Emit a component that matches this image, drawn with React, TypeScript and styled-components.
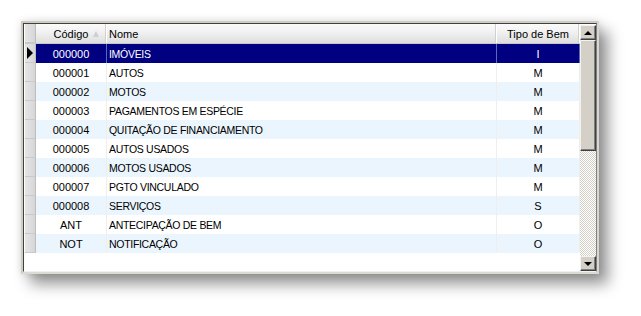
import styled, { createGlobalStyle } from 'styled-components';

const GlobalStyle = createGlobalStyle`
  html, body {
    margin: 0;
    padding: 0;
    background: #ffffff;
  }
  body {
    font-family: "Liberation Sans", Arial, sans-serif;
    font-size: 11px;
    color: #000;
  }
`;

const Page = styled.div`
  width: 641px;
  height: 316px;
  padding: 21px 0 0 21px;
  box-sizing: border-box;
`;

const Frame = styled.div`
  width: 578px;
  height: 253px;
  box-sizing: border-box;
  border: 2px solid #cfccc4;
  border-right-color: #d8d6d0;
  border-bottom-color: #dcdad4;
  background: #fff;
  box-shadow: 9px 10px 14px rgba(0, 0, 0, 0.42), 0 0 8px rgba(0, 0, 0, 0.12);
  display: flex;
`;

const Inner = styled.div`
  flex: 1;
  display: flex;
  border-top: 1px solid #404040;
  border-left: 1px solid #404040;
  border-right: 1px solid #808080;
  border-bottom: 1px solid #f0f0f0;
  padding: 0 0 0 1px;
`;

const Grid = styled.div`
  flex: 1;
  display: flex;
  flex-direction: column;
`;

const cols = '11px 71px 1fr 83px';

const HeaderRow = styled.div`
  display: grid;
  grid-template-columns: ${cols};
  height: 19px;
  background: linear-gradient(#fbfbfb, #f2f2f2 40%, #dedede);
  border-bottom: 1px solid #c8c8c8;
`;

const HeaderCell = styled.div<{ $align?: string }>`
  display: flex;
  align-items: center;
  justify-content: ${({ $align }) => $align || 'center'};
  padding-left: ${({ $align }) => ($align === 'flex-start' ? '2px' : '0')};
  border-right: 1px solid #ffffff;
  box-shadow: inset -1px 0 0 #d0d0d0;
  position: relative;
  color: #000;
`;

const SortMark = styled.span`
  position: absolute;
  right: 7px;
  top: 7px;
  width: 0;
  height: 0;
  border-left: 3px solid transparent;
  border-right: 3px solid transparent;
  border-bottom: 6px solid #cfcfcf;
`;

const Row = styled.div<{ $alt?: boolean; $selected?: boolean }>`
  display: grid;
  grid-template-columns: ${cols};
  height: 19px;
  background: ${({ $selected, $alt }) => ($selected ? '#000080' : $alt ? '#ebf5fe' : '#ffffff')};
  color: ${({ $selected }) => ($selected ? '#ffffff' : '#000000')};
`;

const Indicator = styled.div`
  background: linear-gradient(90deg, #e6e6e6, #d6d6d6);
  border-right: 1px solid #bdbdbd;
  border-bottom: 1px solid #c9c9c9;
  display: flex;
  align-items: center;
  justify-content: center;
`;

const Arrow = styled.span`
  width: 0;
  height: 0;
  border-top: 6px solid transparent;
  border-bottom: 6px solid transparent;
  border-left: 6px solid #000;
`;

const Cell = styled.div<{ $align?: string; $selected?: boolean }>`
  display: flex;
  align-items: center;
  justify-content: ${({ $align }) => $align || 'center'};
  padding-left: ${({ $align }) => ($align === 'flex-start' ? '2px' : '0')};
  border-right: 1px solid ${({ $selected }) => ($selected ? '#5a6ab8' : '#eeeeee')};
  white-space: nowrap;
  overflow: hidden;
`;

const NameCell = styled(Cell)`
  font-size: 10.5px;
  letter-spacing: -0.3px;
`;

const Scrollbar = styled.div`
  width: 16px;
  display: flex;
  flex-direction: column;
  padding-top: 1px;
`;

const ScrollButton = styled.div`
  height: 15px;
  box-sizing: border-box;
  background: #d4d0c8;
  border: 1px solid;
  border-color: #f4f2ee #404040 #404040 #f4f2ee;
  box-shadow: inset -1px -1px 0 #808080;
  display: flex;
  align-items: center;
  justify-content: center;
`;

const Tri = styled.span<{ $down?: boolean }>`
  width: 0;
  height: 0;
  border-left: 4px solid transparent;
  border-right: 4px solid transparent;
  ${({ $down }) => ($down ? 'border-top: 4px solid #000;' : 'border-bottom: 4px solid #000;')}
`;

const Thumb = styled(ScrollButton)`
  height: 111px;
`;

const Track = styled.div`
  flex: 1;
  background-color: #ffffff;
  background-image: repeating-conic-gradient(#d4d0c8 0% 25%, #ffffff 0% 50%);
  background-size: 2px 2px;
`;

const rows = [
  ['000000', 'IMÓVEIS', 'I'],
  ['000001', 'AUTOS', 'M'],
  ['000002', 'MOTOS', 'M'],
  ['000003', 'PAGAMENTOS EM ESPÉCIE', 'M'],
  ['000004', 'QUITAÇÃO DE FINANCIAMENTO', 'M'],
  ['000005', 'AUTOS USADOS', 'M'],
  ['000006', 'MOTOS USADOS', 'M'],
  ['000007', 'PGTO VINCULADO', 'M'],
  ['000008', 'SERVIÇOS', 'S'],
  ['ANT', 'ANTECIPAÇÃO DE BEM', 'O'],
  ['NOT', 'NOTIFICAÇÃO', 'O'],
];

export default function App() {
  return (
    <>
      <GlobalStyle />
      <Page>
        <Frame>
          <Inner>
            <Grid>
              <HeaderRow>
                <Indicator />
                <HeaderCell>
                  Código
                  <SortMark />
                </HeaderCell>
                <HeaderCell $align="flex-start">Nome</HeaderCell>
                <HeaderCell>Tipo de Bem</HeaderCell>
              </HeaderRow>
              {rows.map(([code, name, kind], i) => (
                <Row key={code} $alt={i % 2 === 0 && i > 0} $selected={i === 0}>
                  <Indicator>{i === 0 && <Arrow />}</Indicator>
                  <Cell $selected={i === 0}>{code}</Cell>
                  <NameCell $align="flex-start" $selected={i === 0}>{name}</NameCell>
                  <Cell $selected={i === 0}>{kind}</Cell>
                </Row>
              ))}
            </Grid>
            <Scrollbar>
              <ScrollButton>
                <Tri />
              </ScrollButton>
              <Thumb />
              <Track />
              <ScrollButton>
                <Tri $down />
              </ScrollButton>
            </Scrollbar>
          </Inner>
        </Frame>
      </Page>
    </>
  );
}
